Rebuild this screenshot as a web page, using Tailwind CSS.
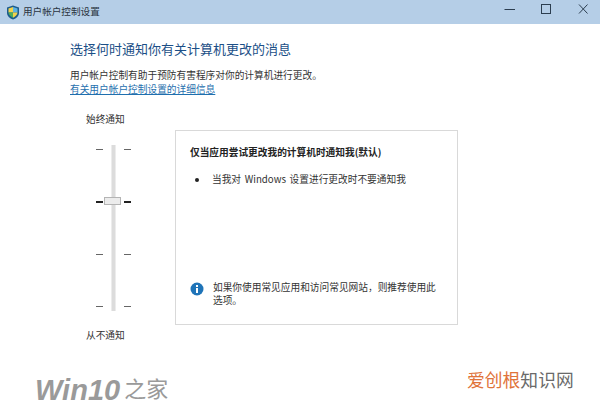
<!DOCTYPE html>
<html lang="zh-CN">
<head>
  <meta charset="UTF-8">
  <title>用户帐户控制设置</title>
  <script src="https://cdn.jsdelivr.net/npm/@tailwindcss/browser@4"></script>
</head>
<body class="w-[600px] h-[400px] overflow-hidden bg-white relative font-['Noto_Sans_CJK_SC','Noto_Sans',sans-serif] text-[#333]">

  <!-- title bar -->
  <div class="h-[24px] bg-[#b5cee7] flex items-center pl-[6px]">
    <svg width="14" height="15" viewBox="0 0 14 15" class="shrink-0">
      <path d="M7 .5 13 2.500V8c0 3-2.600 5.300-6 6.500C3.600 13.300 1 11 1 8V2.500Z" fill="#1d5c8c"/>
      <path d="M7 2 7 7.500 2.500 7.500V3.500Z" fill="#f2d24a"/>
      <path d="M7 2 11.500 3.500V7.500L7 7.500Z" fill="#5fb3e0"/>
      <path d="M7 7.500H11.500C11.300 9.800 9.400 11.700 7 12.800Z" fill="#f2d24a"/>
      <path d="M7 7.500H2.500C2.700 9.800 4.600 11.700 7 12.800Z" fill="#4fae5a"/>
    </svg>
    <span class="ml-[3px] text-[9.6px] leading-none text-[#2a3440]">用户帐户控制设置</span>
    <div class="ml-auto flex items-center">
      <svg width="120" height="24" viewBox="0 0 120 24" fill="none" stroke="#2c3e50">
        <path d="M24.500 9.500H35" stroke-width="1"/>
        <rect x="61.500" y="4.500" width="9" height="9" stroke-width="1"/>
        <path d="M99 4.500 107.500 13.500M107.500 4.500 99 13.500" stroke-width="1"/>
      </svg>
    </div>
  </div>

  <main class="pl-[70px] pr-[142px]">
    <h1 class="mt-[17px] text-[13px] leading-[16px] font-normal text-[#1c4f87] whitespace-nowrap">选择何时通知你有关计算机更改的消息</h1>
    <p class="mt-[12px] text-[9.7px] leading-[13px] whitespace-nowrap">用户帐户控制有助于预防有害程序对你的计算机进行更改。</p>
    <a class="block mt-[1px] text-[9.7px] leading-[13px] text-[#1f6fae] underline whitespace-nowrap">有关用户帐户控制设置的详细信息</a>

    <div class="mt-[15px] flex">
      <!-- slider column -->
      <div class="w-[105px] shrink-0">
        <div class="pl-[16px] text-[9.7px] leading-[13px] mt-[2px]">始终通知</div>
        <div class="mt-[19px] ml-[26px] w-[35px] h-[166px] relative">
          <div class="absolute left-[15px] top-0 w-[5px] h-full bg-[#dcdcdc] border-x border-[#ececec]"></div>
          <div class="h-full flex flex-col justify-between py-[4px]">
            <div class="flex justify-between"><i class="block w-[7px] h-px bg-[#666]"></i><i class="block w-[7px] h-px bg-[#666]"></i></div>
            <div class="flex justify-between"><i class="block w-[7px] h-[2px] bg-[#222]"></i><i class="block w-[7px] h-[2px] bg-[#222]"></i></div>
            <div class="flex justify-between"><i class="block w-[7px] h-px bg-[#666]"></i><i class="block w-[7px] h-px bg-[#666]"></i></div>
            <div class="flex justify-between"><i class="block w-[7px] h-px bg-[#666]"></i><i class="block w-[7px] h-px bg-[#666]"></i></div>
          </div>
          <div class="absolute left-[8px] top-[52px] w-[17px] h-[8px] bg-[#ececec] border border-[#b4b4b4]"></div>
        </div>
        <div class="pl-[16px] mt-[18px] text-[9.7px] leading-[13px]">从不通知</div>
      </div>

      <!-- description panel -->
      <div class="mt-[19px] w-[283px] h-[195px] shrink-0 border border-[#d9d9d9] flex flex-col pl-[14px] pr-[14px]">
        <div class="mt-[15px] text-[9.7px] leading-[13px] font-bold text-[#222] whitespace-nowrap">仅当应用尝试更改我的计算机时通知我(默认)</div>
        <div class="mt-[14px] flex items-center text-[9.7px] leading-[13px] whitespace-nowrap">
          <span class="ml-[5px] w-[4px] h-[4px] rounded-full bg-[#222]"></span>
          <span class="ml-[13px] [word-spacing:1.500px]">当我对 Windows 设置进行更改时不要通知我</span>
        </div>
        <div class="mt-auto mb-[17px] flex items-start">
          <svg width="14" height="14" viewBox="0 0 14 14" class="shrink-0 mt-[1px]">
            <circle cx="7" cy="7" r="6.500" fill="#1f74b8"/>
            <rect x="6" y="6" width="2" height="5" fill="#fff"/>
            <rect x="6" y="3" width="2" height="2" fill="#fff"/>
          </svg>
          <p class="ml-[9px] w-[230px] text-[9.7px] leading-[13px]">如果你使用常见应用和访问常见网站，则推荐使用此<br>选项。</p>
        </div>
      </div>
    </div>
  </main>

  <!-- watermarks, cut off by the bottom edge as in the screenshot -->
  <div class="absolute left-[35px] top-[376px] flex items-start text-[#9a9a9a] leading-none whitespace-nowrap">
    <span class="font-['Liberation_Sans'] font-bold italic text-[29px]">Win10</span>
    <span class="ml-[4px] text-[22px]">之家</span>
  </div>
  <div class="absolute left-[467px] top-[371px] text-[17.800px] leading-none whitespace-nowrap"><span class="text-[#e0733a]">爱创根</span><span class="text-[#6a6a6a]">知识网</span></div>
</body>
</html>
